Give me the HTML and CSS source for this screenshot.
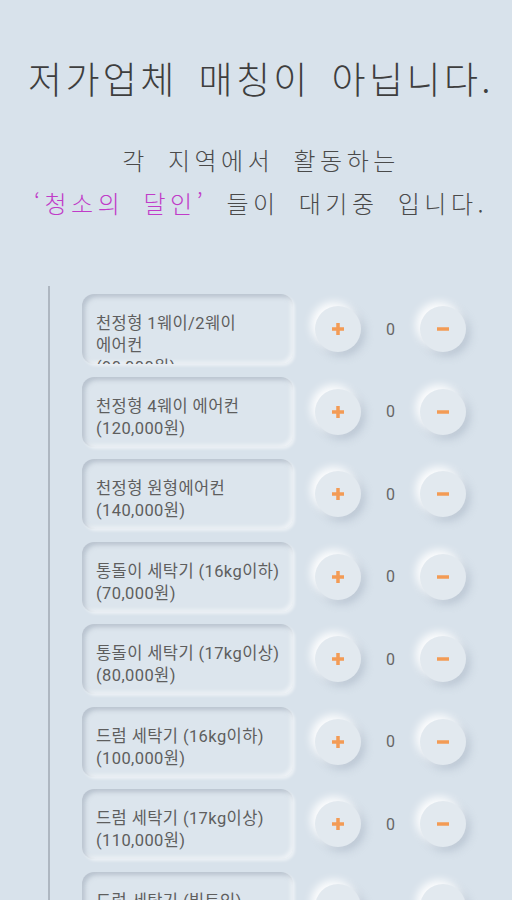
FILE: index.html
```html
<!DOCTYPE html>
<html lang="ko">
<head>
    <meta charset="UTF-8">
    <title>청소의 달인</title>
    <link rel="stylesheet" href="styles.css">
</head>
<body>

    <!-- 상단 안내 문구 -->
    <div class="intro">
        <h1 class="titulo">저가업체 매칭이 아닙니다.</h1>
        <p class="sub">각 지역에서 활동하는<br><span class="rosa">‘청소의 달인’</span> 들이 대기중 입니다.</p>
    </div>

    <!-- 서비스 목록 -->
    <div class="lista">
        <div class="fila">
            <div class="tarjeta">천정형 1웨이/2웨이<br>에어컨<br>(90,000원)</div>
            <button class="btn"><svg viewBox="0 0 20 20"><path d="M10 4v12M4 10h12"/></svg></button>
            <span class="cuenta">0</span>
            <button class="btn"><svg viewBox="0 0 20 20"><path d="M4 10h12"/></svg></button>
        </div>
        <div class="fila">
            <div class="tarjeta">천정형 4웨이 에어컨<br>(120,000원)</div>
            <button class="btn"><svg viewBox="0 0 20 20"><path d="M10 4v12M4 10h12"/></svg></button>
            <span class="cuenta">0</span>
            <button class="btn"><svg viewBox="0 0 20 20"><path d="M4 10h12"/></svg></button>
        </div>
        <div class="fila">
            <div class="tarjeta">천정형 원형에어컨<br>(140,000원)</div>
            <button class="btn"><svg viewBox="0 0 20 20"><path d="M10 4v12M4 10h12"/></svg></button>
            <span class="cuenta">0</span>
            <button class="btn"><svg viewBox="0 0 20 20"><path d="M4 10h12"/></svg></button>
        </div>
        <div class="fila">
            <div class="tarjeta">통돌이 세탁기 (16kg이하)<br>(70,000원)</div>
            <button class="btn"><svg viewBox="0 0 20 20"><path d="M10 4v12M4 10h12"/></svg></button>
            <span class="cuenta">0</span>
            <button class="btn"><svg viewBox="0 0 20 20"><path d="M4 10h12"/></svg></button>
        </div>
        <div class="fila">
            <div class="tarjeta">통돌이 세탁기 (17kg이상)<br>(80,000원)</div>
            <button class="btn"><svg viewBox="0 0 20 20"><path d="M10 4v12M4 10h12"/></svg></button>
            <span class="cuenta">0</span>
            <button class="btn"><svg viewBox="0 0 20 20"><path d="M4 10h12"/></svg></button>
        </div>
        <div class="fila">
            <div class="tarjeta">드럼 세탁기 (16kg이하)<br>(100,000원)</div>
            <button class="btn"><svg viewBox="0 0 20 20"><path d="M10 4v12M4 10h12"/></svg></button>
            <span class="cuenta">0</span>
            <button class="btn"><svg viewBox="0 0 20 20"><path d="M4 10h12"/></svg></button>
        </div>
        <div class="fila">
            <div class="tarjeta">드럼 세탁기 (17kg이상)<br>(110,000원)</div>
            <button class="btn"><svg viewBox="0 0 20 20"><path d="M10 4v12M4 10h12"/></svg></button>
            <span class="cuenta">0</span>
            <button class="btn"><svg viewBox="0 0 20 20"><path d="M4 10h12"/></svg></button>
        </div>
        <div class="fila">
            <div class="tarjeta">드럼 세탁기 (빌트인)<br>(130,000원)</div>
            <button class="btn"><svg viewBox="0 0 20 20"><path d="M10 4v12M4 10h12"/></svg></button>
            <span class="cuenta">0</span>
            <button class="btn"><svg viewBox="0 0 20 20"><path d="M4 10h12"/></svg></button>
        </div>
    </div>

</body>
</html>
```

FILE: styles.css
```css
/* 기본 */
body {
    margin: 0;
    background-color: #d8e2eb;
    font-family: Roboto, "Noto Sans CJK KR", sans-serif;
    color: #5a5a5a;
}

/* 상단 문구 */
.intro {
    padding-left: 10px;
    text-align: center;
    font-family: "Noto Sans CJK KR", sans-serif;
}

.titulo {
    margin: 0;
    padding-top: 55px;
    font-size: 37px;
    font-weight: 300;
    line-height: 46px;
    letter-spacing: 3.4px;
    word-spacing: 7px;
    color: #3e3e3e;
}

.sub {
    margin: 37px 0 0;
    font-size: 24px;
    font-weight: 300;
    line-height: 43px;
    letter-spacing: 4.5px;
    word-spacing: 8px;
    color: #4a4a4a;
}

.rosa {
    color: #c03cc8;
}

/* 목록 */
.lista {
    margin: 62px 0 0 48px;
    padding: 8px 0 0 32px;
    border-left: 2px solid #aeb7c1;
    display: flex;
    flex-direction: column;
    gap: 12.5px;
}

.fila {
    display: flex;
    align-items: center;
}

.tarjeta {
    box-sizing: border-box;
    width: 211px;
    height: 70px;
    padding: 19px 0 0 14px;
    overflow: hidden;
    border-radius: 12px;
    background-color: #dce5ed;
    font-size: 16.5px;
    line-height: 22px;
    letter-spacing: 0.4px;
    color: #5e5e5e;
    box-shadow: inset 3px 3px 4px rgba(150, 162, 178, 0.5),
                inset -2px -2px 4px rgba(255, 255, 255, 0.6),
                2px 2px 3px rgba(255, 255, 255, 0.5);
}

.btn {
    width: 46px;
    height: 46px;
    margin-left: 22px;
    padding: 0;
    border: none;
    border-radius: 50%;
    background-color: #e2e9ef;
    box-shadow: -4px -4px 8px rgba(255, 255, 255, 0.95),
                4px 4px 8px rgba(150, 164, 182, 0.45);
    display: flex;
    align-items: center;
    justify-content: center;
}

.btn svg {
    width: 20px;
    height: 20px;
    fill: none;
    stroke: #f39b55;
    stroke-width: 3.5;
}

.cuenta {
    width: 59px;
    text-align: center;
    font-size: 16px;
    color: #666;
}

.cuenta + .btn {
    margin-left: 0;
}
```
